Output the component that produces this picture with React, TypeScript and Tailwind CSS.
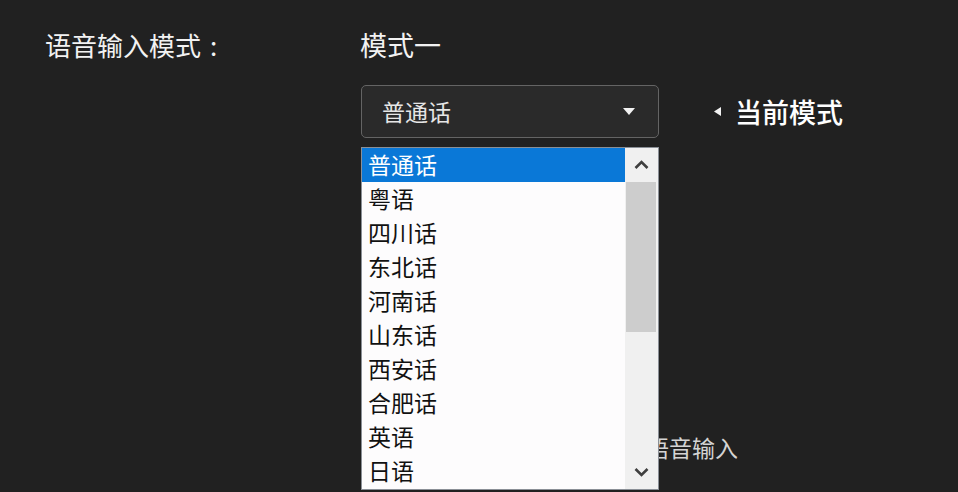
import React from "react";

const items = ["普通话", "粤语", "四川话", "东北话", "河南话", "山东话", "西安话", "合肥话", "英语", "日语"];

function Chevron({ up }: { up?: boolean }) {
  return (
    <svg width="15" height="10" viewBox="0 0 15 10">
      <path
        d={up ? "M1.5 8 L7.5 2 L13.5 8" : "M1.5 2 L7.5 8 L13.5 2"}
        fill="none"
        stroke="#3f3f3f"
        strokeWidth="2.6"
      />
    </svg>
  );
}

export default function App() {
  return (
    <div className="relative w-[958px] h-[492px] overflow-hidden bg-[#212121] font-['Noto_Sans_CJK_SC','Microsoft_YaHei',sans-serif] text-[#f2f2f2]">
      <div className="flex">
        <div className="w-[360px] shrink-0 pl-[45px] pt-[32px] text-[26px] leading-[26px]">
          语音输入模式<span className="ml-[9px]">:</span>
        </div>
        <div className="flex flex-col pt-[32px]">
          <div className="text-[27px] leading-[26px]">模式一</div>
          <div className="mt-[27px] flex items-center">
            <div className="ml-[1px] flex h-[53px] w-[298px] items-center justify-between rounded-[5px] border border-[#646464] bg-[#2a2a2a] pl-[20px] pr-[23px]">
              <span className="text-[23px] leading-[23px] text-[#e6e6e6]">普通话</span>
              <svg width="12" height="8" viewBox="0 0 12 8">
                <path d="M0 0 L12 0 L6 7 Z" fill="#f2f2f2" />
              </svg>
            </div>
            <div className="ml-[55px] flex items-center">
              <svg width="7" height="9" viewBox="0 0 7 9">
                <path d="M7 0 L7 9 L0 4.5 Z" fill="#f2f2f2" />
              </svg>
              <span className="ml-[14px] text-[27px] leading-[28px] font-medium text-white">当前模式</span>
            </div>
          </div>
          <div className="mt-[298px] ml-[240px] text-[23px] leading-[23px] text-[#d4d4d4]">启用语音输入</div>
        </div>
      </div>

      <div className="absolute left-[361px] top-[147px] flex h-[343px] w-[298px] border border-[#8a8f96] bg-[#fdfcfd]">
        <div className="flex w-[263px] flex-col">
          {items.map((it, i) => (
            <div
              key={it}
              className={
                i === 0
                  ? "flex h-[34px] shrink-0 items-center bg-[#0a78d7] pb-[2px] pl-[6px] text-[23px] leading-[23px] text-white"
                  : "flex h-[34px] shrink-0 items-center pb-[2px] pl-[6px] text-[23px] leading-[23px] text-[#111111]"
              }
            >
              {it}
            </div>
          ))}
        </div>
        <div className="flex w-[33px] flex-col bg-[#f0f0f0]">
          <div className="flex h-[34px] shrink-0 items-center justify-center">
            <Chevron up />
          </div>
          <div className="ml-[1px] mr-[2px] h-[150px] bg-[#cdcdcd]" />
          <div className="flex-1" />
          <div className="flex h-[34px] shrink-0 items-center justify-center">
            <Chevron />
          </div>
        </div>
      </div>
    </div>
  );
}
